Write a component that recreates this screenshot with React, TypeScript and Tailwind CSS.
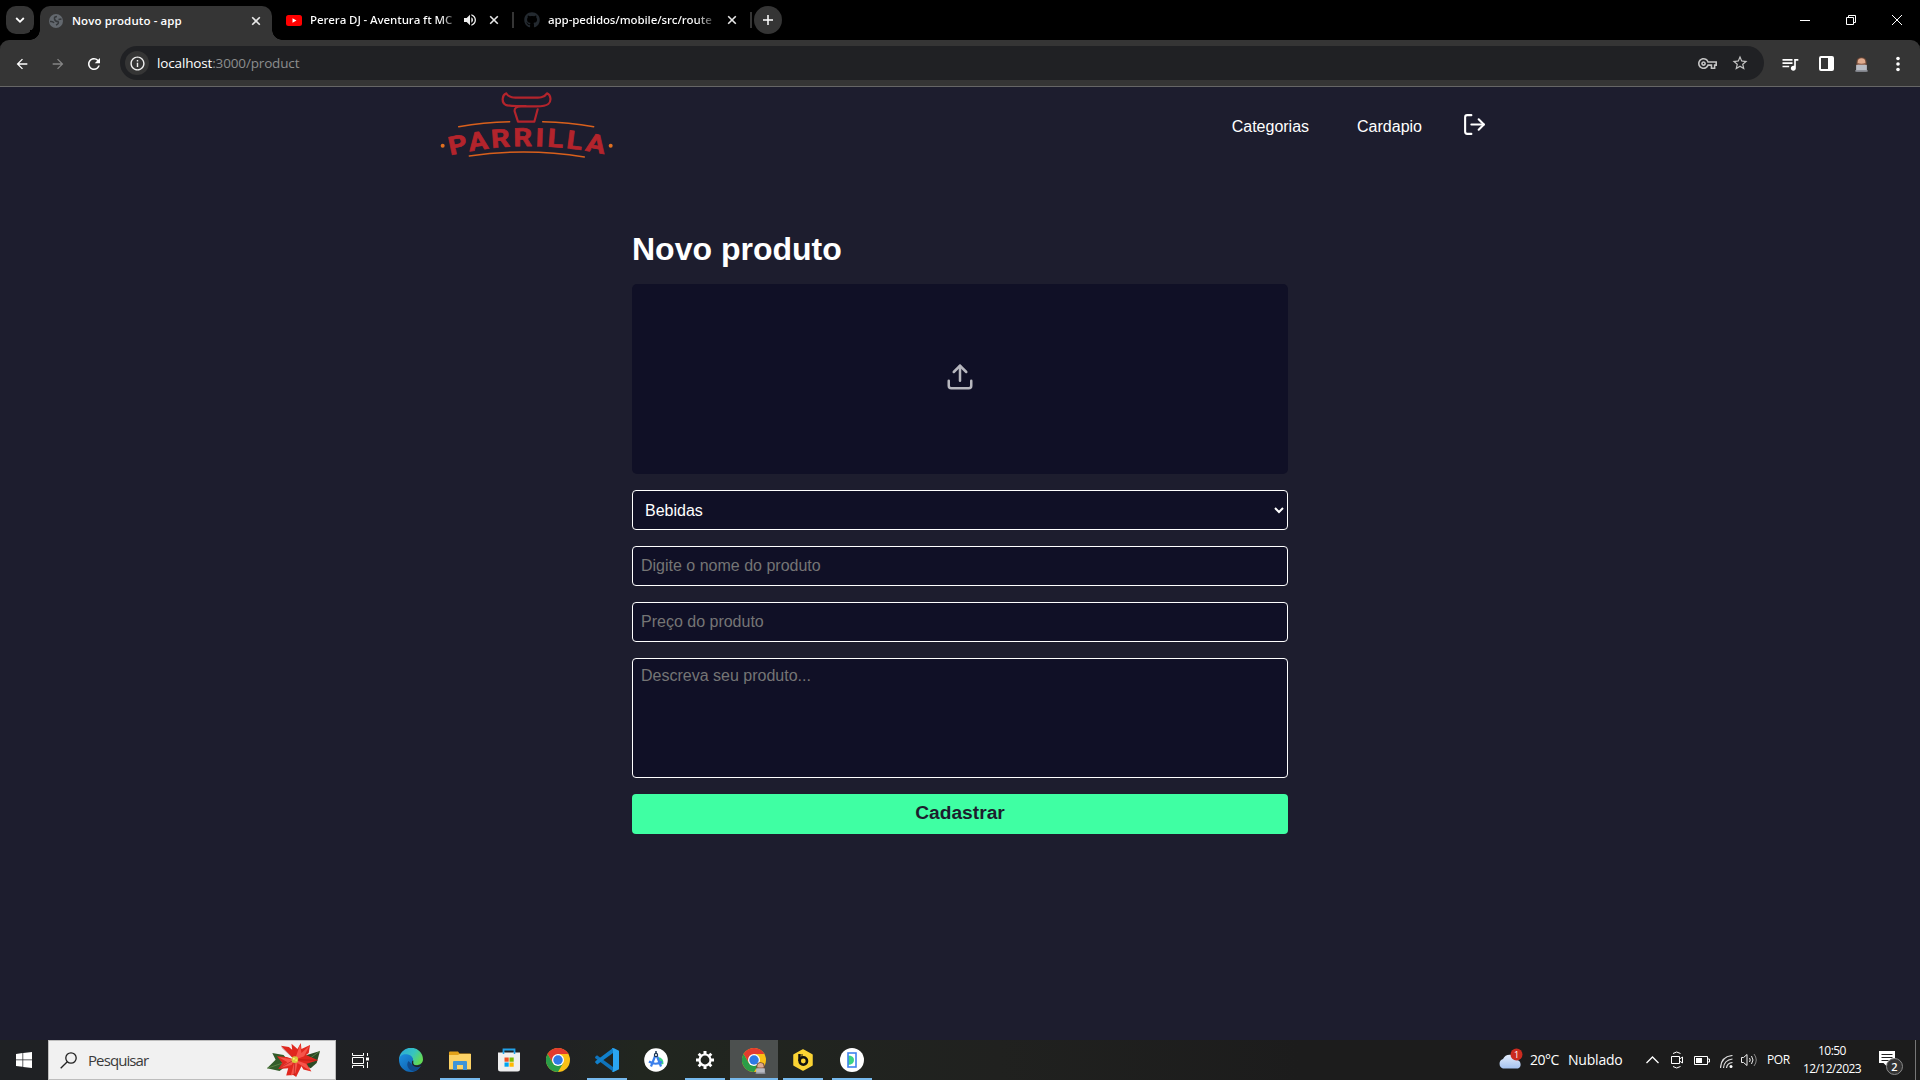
import React from "react";
import { FiLogOut, FiUpload } from "react-icons/fi";
import { FaGithub } from "react-icons/fa";
import {
  MdArrowBack,
  MdArrowForward,
  MdRefresh,
  MdOutlineInfo,
  MdStarBorder,
  MdQueueMusic,
  MdVolumeUp,
  MdOutlineVpnKey,
} from "react-icons/md";

function CloseX({ className = "" }: { className?: string }) {
  return (
    <svg viewBox="0 0 10 10" className={"size-[10px] shrink-0 " + className} fill="none" stroke="#e8e8e8" strokeWidth="1.6">
      <path d="M1.2 1.2 8.8 8.8M8.8 1.2 1.2 8.8" />
    </svg>
  );
}

function Person({ className = "" }: { className?: string }) {
  return (
    <svg viewBox="0 0 14 16" className={className}>
      <path d="M1.500 7Q1 .3 7 .3T12.500 7l.5 3H1z" fill="#6b4635" />
      <ellipse cx="7" cy="5.500" rx="4.200" ry="4.300" fill="#e0ab8e" />
      <path d="M2.800 6.500Q7 8 11.200 6.500 10.500 10.500 7 10.500T2.800 6.500" fill="#8a5a45" />
      <rect x="1.200" y="8.200" width="11.600" height="7" rx="1" fill="#b9bcc4" />
      <rect x="0.300" y="14" width="13.400" height="1.700" rx=".6" fill="#8d9098" />
    </svg>
  );
}

function TabBar() {
  return (
    <div className="flex h-10 items-center bg-black">
      <div className="ml-[6px] flex size-7 items-center justify-center rounded-[10px] bg-[#353535]">
        <svg viewBox="0 0 10 10" className="size-[10px]" fill="none" stroke="#fff" strokeWidth="1.8">
          <path d="m1.2 3 3.8 3.8L8.8 3" />
        </svg>
      </div>
      <div className="relative ml-[6px] flex h-[34px] w-[232px] items-center self-end rounded-t-[10px] bg-[#353535] pb-[5px] pl-[9px]">
        <div className="absolute -left-[10px] bottom-0 size-[10px] bg-[radial-gradient(circle_at_0_0,#000_9.5px,#353535_10px)]" />
        <div className="absolute -right-[10px] bottom-0 size-[10px] bg-[radial-gradient(circle_at_100%_0,#000_9.5px,#353535_10px)]" />
        <svg viewBox="0 0 14 14" className="size-[14px]">
          <circle cx="7" cy="7" r="7" fill="#63686e" />
          <path d="M8 2.500Q5 2.500 5.500 5T9 7.500q1.500 2-2 3.500M1 7.500q3-.5 4 1.500M9.500 5.500 12.500 5" fill="none" stroke="#35383b" strokeWidth="1.500" />
        </svg>
        <span className="ml-[9px] w-[179px] whitespace-nowrap text-[11.5px] leading-4 font-semibold tracking-[0.1px] text-white">Novo produto - app</span>
        <CloseX />
      </div>
      <svg viewBox="0 0 16 11" className="ml-[14px] h-[11px] w-4">
        <rect width="16" height="11" rx="2.5" fill="#f00" />
        <path d="m6.5 3.2 4 2.3-4 2.3z" fill="#fff" />
      </svg>
      <span className="ml-2 w-[147px] bg-[linear-gradient(90deg,#fff_130px,transparent_150px)] bg-clip-text whitespace-nowrap text-[11.5px] leading-4 font-semibold tracking-[-0.12px] text-transparent">Perera DJ - Aventura ft MC</span>
      <MdVolumeUp className="ml-[5px] size-[16px] text-[#eee]" />
      <CloseX className="ml-[11px]" />
      <div className="ml-[13px] h-4 w-[2px] bg-[#353535]" />
      <FaGithub className="ml-[10px] size-4 text-[#23292f]" />
      <span className="ml-2 w-[168px] bg-[linear-gradient(90deg,#fff_148px,transparent_170px)] bg-clip-text whitespace-nowrap text-[11.5px] leading-4 font-semibold tracking-[-0.12px] text-transparent">app-pedidos/mobile/src/route</span>
      <CloseX className="ml-[11px]" />
      <div className="ml-[13px] h-4 w-[2px] bg-[#353535]" />
      <div className="ml-[2px] flex size-7 items-center justify-center rounded-full bg-[#353535]">
        <svg viewBox="0 0 10 10" className="size-[10px]" stroke="#fff" strokeWidth="1.5">
          <path d="M5 0v10M0 5h10" />
        </svg>
      </div>
      <div className="mr-[18px] ml-auto flex items-center gap-9">
        <svg viewBox="0 0 10 10" className="size-[10px]" stroke="#fff">
          <path d="M0 5.5h10" />
        </svg>
        <svg viewBox="0 0 10 10" className="size-[10px]" fill="none" stroke="#fff">
          <path d="M.5 2.5h7v7h-7zM2.5 2.5v-2h7v7h-2" />
        </svg>
        <svg viewBox="0 0 10 10" className="size-[10px]" fill="none" stroke="#fff">
          <path d="m0 0 10 10M10 0 0 10" />
        </svg>
      </div>
    </div>
  );
}

function Toolbar() {
  return (
    <div className="bg-black">
      <div className="flex h-[47px] items-center rounded-t-[9px] bg-[#353535] shadow-[inset_0_-1px_#666]">
        <MdArrowBack className="ml-[14px] size-4 text-white" />
        <MdArrowForward className="ml-5 size-4 text-[#858585]" />
        <MdRefresh className="ml-[19px] size-[18px] text-white" />
        <div className="mb-px ml-[17px] flex h-[34px] w-[1644px] items-center rounded-full bg-[#202124]">
          <div className="ml-[5px] flex size-6 items-center justify-center rounded-full bg-[#353535]">
            <MdOutlineInfo className="size-[17px] text-[#eee]" />
          </div>
          <span className="ml-2 whitespace-nowrap text-[13.5px] leading-5 tracking-[-0.15px] text-[#8c8d8e]">
            <span className="text-white">localhost</span>:3000/product
          </span>
          <MdOutlineVpnKey className="mr-[14px] ml-auto size-[19px] text-[#c4c4c4]" />
          <MdStarBorder className="mr-[15px] size-[18px] text-[#c4c4c4]" />
        </div>
        <MdQueueMusic className="ml-[16px] size-5 text-white" />
        <svg viewBox="0 0 15 15" className="ml-[19px] size-[15px]">
          <rect x="1" y="1" width="13" height="13" rx="1" fill="none" stroke="#fff" strokeWidth="2" />
          <path d="M9 1h5v13H9z" fill="#fff" />
        </svg>
        <Person className="mt-[2px] ml-[21px] h-[15px] w-[13px]" />
        <svg viewBox="0 0 4 16" className="ml-[28px] h-4 w-1" fill="#fff">
          <circle cx="2" cy="2.5" r="1.8" />
          <circle cx="2" cy="8" r="1.8" />
          <circle cx="2" cy="13.5" r="1.8" />
        </svg>
      </div>
    </div>
  );
}

function Logo() {
  return (
    <svg viewBox="60 9 528 240" className="h-20 w-44" fill="none">
      <defs>
        <path id="arch" d="M91 214Q320 159 570 214" />
      </defs>
      <g stroke="#b3242c" strokeWidth="6.500" strokeLinejoin="round" strokeLinecap="round">
        <path d="M259 28C246 33 244 55 256 62Q264 66 290 66H318M259 28C266 43 284 41 320 41S372 43 381 28C394 33 394 53 385 60Q376 67 350 67H303Q282 68 284 82L294 113H343L353 76" />
      </g>
      <g stroke="#d9601c" strokeWidth="4.500" strokeLinecap="round">
        <path d="M116 128Q190 114 269 113M368 113Q446 115 521 128M148 216Q320 190 493 219" />
      </g>
      <circle cx="68" cy="185" r="6" fill="#e07020" />
      <circle cx="572" cy="185" r="6" fill="#e07020" />
      <text fill="#b3242c" stroke="#b3242c" strokeWidth="2" letterSpacing="8" className="font-['Roboto'] text-[76px] font-bold">
        <textPath href="#arch" textLength="474" lengthAdjust="spacingAndGlyphs">PARRILLA</textPath>
      </text>
    </svg>
  );
}

function Page() {
  return (
    <div className="h-[953px] bg-[#1d1d2e] font-['Liberation_Sans',Arial,sans-serif] text-white">
      <header className="mx-auto flex h-20 w-[1040px] items-center">
        <Logo />
        <nav className="ml-auto flex items-center">
          <a className="text-base">Categorias</a>
          <a className="ml-12 text-base">Cardapio</a>
          <FiLogOut className="mr-[-7px] mb-[5px] ml-10 size-[25px]" />
        </nav>
      </header>
      <main className="mx-auto mt-16 flex w-[656px] flex-col">
        <h1 className="text-[32px] leading-9 font-bold">Novo produto</h1>
        <form className="mt-[17px] flex flex-col gap-4">
          <label className="flex h-[190px] items-center justify-center rounded-[5px] bg-[#101026] pb-[4px]">
            <FiUpload className="size-[30px] text-[#b7b7be]" />
          </label>
          <select className="h-10 rounded border border-white bg-[#101026] px-2 text-base text-white">
            <option>Bebidas</option>
          </select>
          <input className="h-10 rounded border border-white bg-[#101026] px-2 text-base placeholder:text-[#757575]" placeholder="Digite o nome do produto" />
          <input className="h-10 rounded border border-white bg-[#101026] px-2 text-base placeholder:text-[#757575]" placeholder="Preço do produto" />
          <textarea className="h-[120px] resize-none rounded border border-white bg-[#101026] p-2 text-base leading-[18px] placeholder:text-[#757575]" placeholder="Descreva seu produto..." />
          <button type="button" className="h-10 rounded bg-[#3fffa3] pb-px text-[19.2px] font-bold text-[#1d1d2e]">Cadastrar</button>
        </form>
      </main>
    </div>
  );
}

function Poinsettia() {
  return (
    <svg viewBox="0 0 160 102" className="h-[34px] w-[53px]">
      <path d="M0 76 26 50 16 30 50 36 70 60 38 84z" fill="#335c2a" />
      <path d="M160 24 120 36 100 62 132 76 150 60z" fill="#2c4a25" />
      <path d="M0 76 60 56M160 24 110 60" stroke="#6b9350" strokeWidth="2" />
      <path d="M84 50 42 8 66 12 76 20 74 2 92 18 102 0 104 18 130 6 126 30 118 36 154 52 120 62 134 86 110 80 104 70 88 102 80 96 58 98 64 76 34 78 46 60 30 40 60 42z" fill="#e0281f" />
      <path d="M84 50 100 4 104 30 128 8 112 40zM84 50 34 42 62 58 36 76 74 66zM84 50 72 98 86 90 92 60 132 84 118 62z" fill="#f7544a" />
      <path d="M84 50 44 12M84 50 82 98M84 50 150 52M84 50 36 76" stroke="#9e1512" strokeWidth="1.6" />
      <circle cx="84" cy="50" r="10" fill="#d8c93a" />
      <circle cx="81" cy="47" r="3" fill="#fff27a" />
      <circle cx="88" cy="52" r="3" fill="#f8e95c" />
    </svg>
  );
}

function Chrome() {
  return (
    <svg viewBox="0 0 48 48" className="size-6">
      <circle cx="24" cy="24" r="24" fill="#fbc116" />
      <path d="M3.2 12A24 24 0 0 1 44.8 12H24L13.6 30z" fill="#e33b2e" />
      <path d="M3.2 12A24 24 0 0 0 24 48L34.4 30 24 35 13.6 30z" fill="#2a9d48" />
      <circle cx="24" cy="24" r="12" fill="#fff" />
      <circle cx="24" cy="24" r="9.5" fill="#2f7ae5" />
    </svg>
  );
}

function Edge() {
  return (
    <svg viewBox="0 0 24 24" className="size-6">
      <defs>
        <linearGradient id="edgeTop" x1="0" y1="0" x2="1" y2=".5">
          <stop offset="0" stopColor="#2aa5dd" />
          <stop offset=".6" stopColor="#36c4c0" />
          <stop offset="1" stopColor="#62d957" />
        </linearGradient>
        <linearGradient id="edgeLow" x1="0" y1="0" x2="1" y2="1">
          <stop offset="0" stopColor="#1c8fe0" />
          <stop offset="1" stopColor="#0c55a0" />
        </linearGradient>
      </defs>
      <path d="M0 12A12 12 0 0 1 24 11.500C24 15.500 20 17.500 16.500 17.200 14.500 17 13.800 16 14.200 14.800 15 12 13 9 9 9Q3 8 0 12z" fill="url(#edgeTop)" />
      <path d="M0 12C0 7 5 5.500 9 6.500c4 1 5.500 4 5 6C12 15 13 17 17 17.500c2.500.300 4-.5 5.500-1.500C20.500 21.500 16.500 24 12 24A12 12 0 0 1 0 12z" fill="url(#edgeLow)" />
      <path d="M9.500 13c-3 4 0 9.500 5 10.300C18 22.500 21 20 22.500 16.500c-4 2.500-9 1.500-10.500-1z" fill="#114a8b" />
      <path d="M14 12.500C12 14 12.500 18 17.500 19c2 .3 4-.5 5-1.500l1-2Q20 18 16.500 17.200 13.500 16.500 14 12.500z" fill="#202224" />
    </svg>
  );
}

function Slot({ children, active = false, line = false }: { children: React.ReactNode; active?: boolean; line?: boolean }) {
  return (
    <div className={"relative flex h-10 w-12 items-center justify-center " + (active ? "bg-[#4c504f]" : "")}>
      {children}
      {(line || active) && <div className={"absolute bottom-0 h-[2px] bg-[#76b9ed] " + (active ? "inset-x-0" : "inset-x-1")} />}
    </div>
  );
}

function Taskbar() {
  return (
    <div className="flex h-10 items-center bg-[linear-gradient(90deg,#1f2124_0,#202124_550px,#21261f_640px,#20211f_1000px,#1c1c1c_1300px)] font-['Open_Sans','Noto_Sans',sans-serif] text-white">
      <svg viewBox="0 0 16 16" className="ml-4 size-4" fill="#fff">
        <path d="M0 2 6.500 1.100v6.500H0zM7.200 1 16 0v7.600H7.200zM0 8.300h6.500v6.500L0 14zM7.200 8.300H16V16l-8.800-1.100z" />
      </svg>
      <div className="ml-4 flex h-10 w-72 items-center border border-[#bdbdbd] bg-[#f1f1f1]">
        <svg viewBox="0 0 17 17" className="ml-[11px] size-[17px]" fill="none" stroke="#222" strokeWidth="1.300">
          <circle cx="11" cy="6" r="5.200" />
          <path d="M7.300 9.700.7 16.300" />
        </svg>
        <span className="ml-[11px] text-[15px] leading-5 tracking-[-0.900px] text-[#3a3a3a]">Pesquisar</span>
        <div className="mr-[15px] ml-auto">
          <Poinsettia />
        </div>
      </div>
      <svg viewBox="0 0 17 15" className="ml-4 h-[15px] w-[17px]" fill="none" stroke="#fff">
        <path d="M.5 0v2.500h11V0M.5 15v-2.500h11V15M.5 4.500h11v6H.5zM15.500 0v3M15.500 9v6" />
        <path d="M14 4.500h3v3h-3z" fill="#fff" stroke="none" />
      </svg>
      <div className="ml-[18px] flex gap-px">
        <Slot><Edge /></Slot>
        <Slot line>
          <svg viewBox="0 0 22 19" className="mt-px h-[19px] w-[22px]">
            <path d="M0 1.500Q0 .5 1 .5h8l1.500 2H21q1 0 1 1V18H0z" fill="#e3a21a" />
            <path d="M0 4h9l1.500-1H22v15.500H0z" fill="#fcd266" />
            <path d="M4 11q0-1 1-1h12q1 0 1 1v8h-4v-5H8v5H4z" fill="#3f94d8" />
          </svg>
          <div className="absolute right-1 bottom-0 h-[2px] w-[9px] bg-[#547ba0]" />
        </Slot>
        <Slot>
          <svg viewBox="0 0 24 24" className="size-6">
            <path d="M6.500 6V1.500h11V6" fill="none" stroke="#22a2e8" strokeWidth="1.800" />
            <path d="M1 4.500h22V21q0 2.500-2.500 2.500h-17Q1 23.500 1 21z" fill="#efefef" />
            <path d="M6.500 6V4M17.500 6V4" stroke="#22a2e8" strokeWidth="1.500" />
            <path d="M7.500 9.500h4.200v4.200H7.500z" fill="#f05022" />
            <path d="M12.500 9.500h4.200v4.200h-4.200z" fill="#7fba00" />
            <path d="M7.500 14.500h4.200v4.200H7.500z" fill="#00a4ef" />
            <path d="M12.500 14.500h4.200v4.200h-4.200z" fill="#ffb900" />
          </svg>
        </Slot>
        <Slot><Chrome /></Slot>
        <Slot line>
          <svg viewBox="0 0 24 24" className="size-6">
            <path d="M0 9 2 7.300 18 19v4.500L.3 10.300z" fill="#0f73bb" />
            <path d="M.3 14.500 2.200 16.500 18 5V0L.3 13.300z" fill="#1180cb" />
            <path d="M17 0q1 0 2 .3L24 2.700v18.600L19 23.700q-1 .5-2 .3l1-1.500V2z" fill="#2aa5f2" />
          </svg>
        </Slot>
        <Slot>
          <svg viewBox="0 0 24 24" className="size-6">
            <circle cx="12" cy="12" r="11.800" fill="#fff" />
            <path d="M14 9q6 1 5.500 7l-4 1z" fill="#3bd583" />
            <path d="M11.500 7 7 18.500M12.500 7l4.500 11.500M5 13.500q7 4.500 13 0" fill="none" stroke="#3b7fec" strokeWidth="2.200" />
            <path d="M12 3v2" stroke="#1b3552" strokeWidth="1.500" />
            <circle cx="12" cy="7" r="1.600" fill="#fff" stroke="#1b3552" strokeWidth="1.200" />
          </svg>
        </Slot>
        <Slot line>
          <svg viewBox="0 0 18 18" className="size-[18px]" fill="none" stroke="#fff">
            <circle cx="9" cy="9" r="5.500" strokeWidth="2.200" />
            <g strokeWidth="3">
              <path d="M7.500 1.500h3M7.500 16.500h3M1.500 7.500v3M16.500 7.500v3M2.700 4.700l2-2M13.300 15.300l2-2M2.700 13.300l2 2M13.300 2.700l2 2" />
            </g>
          </svg>
        </Slot>
        <Slot active>
          <Chrome />
          <Person className="absolute right-[12px] bottom-[6px] h-3 w-[11px]" />
        </Slot>
        <Slot line>
          <svg viewBox="0 0 20 22" className="h-[22px] w-5">
            <path d="M10 1 19 6v10l-9 5-9-5V6z" fill="#fbd434" stroke="#fbd434" strokeWidth="1.500" strokeLinejoin="round" />
            <path d="M6.500 5v7" stroke="#111" strokeWidth="2.500" />
            <circle cx="10.300" cy="12" r="3.700" fill="none" stroke="#111" strokeWidth="2.600" />
            <path d="M9 5v4" stroke="#111" strokeWidth="1" />
          </svg>
        </Slot>
        <Slot line>
          <svg viewBox="0 0 24 24" className="size-6">
            <circle cx="12" cy="12" r="12" fill="#fff" />
            <path d="M8 7.500q6 0 6 4.500t-6 5z" fill="#3bd583" />
            <rect x="8" y="5" width="8" height="14" fill="none" stroke="#3f83ee" strokeWidth="1.600" />
          </svg>
        </Slot>
      </div>
      <div className="ml-auto flex h-10 items-center">
        <svg viewBox="0 0 25 21" className="mb-[4px] h-[21px] w-[25px]">
          <defs>
            <linearGradient id="cloud" x1="0" y1="0" x2="0" y2="1">
              <stop offset="0" stopColor="#e4edfb" />
              <stop offset="1" stopColor="#a4c2f0" />
            </linearGradient>
          </defs>
          <path d="M5 20.500a5 5 0 0 1 0-9.500 7.500 7.500 0 0 1 14 1 4.500 4.500 0 0 1 1 8.500z" fill="url(#cloud)" />
          <circle cx="18.500" cy="6.500" r="6" fill="#cb2b1f" />
          <text x="18.500" y="10" textAnchor="middle" fill="#fff" className="text-[9px]">1</text>
        </svg>
        <span className="ml-[7px] w-[38px] whitespace-nowrap text-[14px] leading-5 tracking-[-0.500px]">20°C</span>
        <span className="w-[54px] whitespace-nowrap text-[14px] leading-5 tracking-[-0.200px]">Nublado</span>
        <svg viewBox="0 0 13 8" className="ml-[24px] h-2 w-[13px]" fill="none" stroke="#fff" strokeWidth="1.300">
          <path d="m.5 7 6-6 6 6" />
        </svg>
        <svg viewBox="0 0 12 18" className="ml-3 h-[18px] w-3" fill="none" stroke="#fff">
          <path d="M.5 5.500h8v7h-8zM8.500 8l3-2v6l-3-2M2 2.500Q5.500-.5 9.500 2.500M2 15.500q3.500 3 7.500 0" />
        </svg>
        <svg viewBox="0 0 16 9" className="ml-[11px] h-[9px] w-4">
          <path d="M.5.5h13v8H.5zM13.500 3h2v3h-2" fill="none" stroke="#fff" />
          <path d="M2 2h6v5H2z" fill="#fff" />
        </svg>
        <svg viewBox="0 0 13 13" className="mt-[2px] ml-[10px] size-[13px]" fill="none" stroke="#ddd">
          <path d="M.5 13Q1 1.500 12.500.5M3.500 13Q4 5 12.500 4M6.500 13Q7 8 12.500 7.500" strokeWidth="1.200" />
          <circle cx="11" cy="11.500" r="1.500" fill="#fff" stroke="none" />
        </svg>
        <svg viewBox="0 0 17 14" className="ml-2 h-[14px] w-[17px]" fill="none" stroke="#eee">
          <path d="M.5 4.500h2l3.500-3v11l-3.500-3h-2zM8.500 5q1.500 2 0 4M10.500 3q3 4 0 8" />
          <path d="M13 1q4.500 6 0 12" stroke="#888" />
        </svg>
        <span className="ml-[9px] w-6 whitespace-nowrap text-[12px] leading-4 tracking-[-0.450px]">POR</span>
        <div className="ml-[11px] flex w-[60px] flex-col items-center whitespace-nowrap text-[12px] leading-[18px] tracking-[-0.550px]">
          <span>10:50</span>
          <span>12/12/2023</span>
        </div>
        <svg viewBox="0 0 25 25" className="mt-[5px] ml-[16px] size-[25px]">
          <path d="M1 1h16v12H9v3.500L5.500 13H1z" fill="#fff" />
          <path d="M3.500 4.500h11M3.500 7.500h11M3.500 10.500h7" stroke="#222" />
          <circle cx="16.500" cy="16.500" r="8" fill="#333" stroke="#8a8a8a" />
          <text x="16.500" y="20.500" textAnchor="middle" fill="#fff" className="text-[11px] font-semibold">2</text>
        </svg>
        <div className="mr-1 ml-[12px] h-10 w-px bg-[#777]" />
      </div>
    </div>
  );
}

export default function App() {
  return (
    <div className="flex h-[1080px] w-[1920px] flex-col overflow-hidden bg-[#1d1d2e] font-['Open_Sans','Noto_Sans',sans-serif]">
      <TabBar />
      <Toolbar />
      <Page />
      <Taskbar />
    </div>
  );
}
